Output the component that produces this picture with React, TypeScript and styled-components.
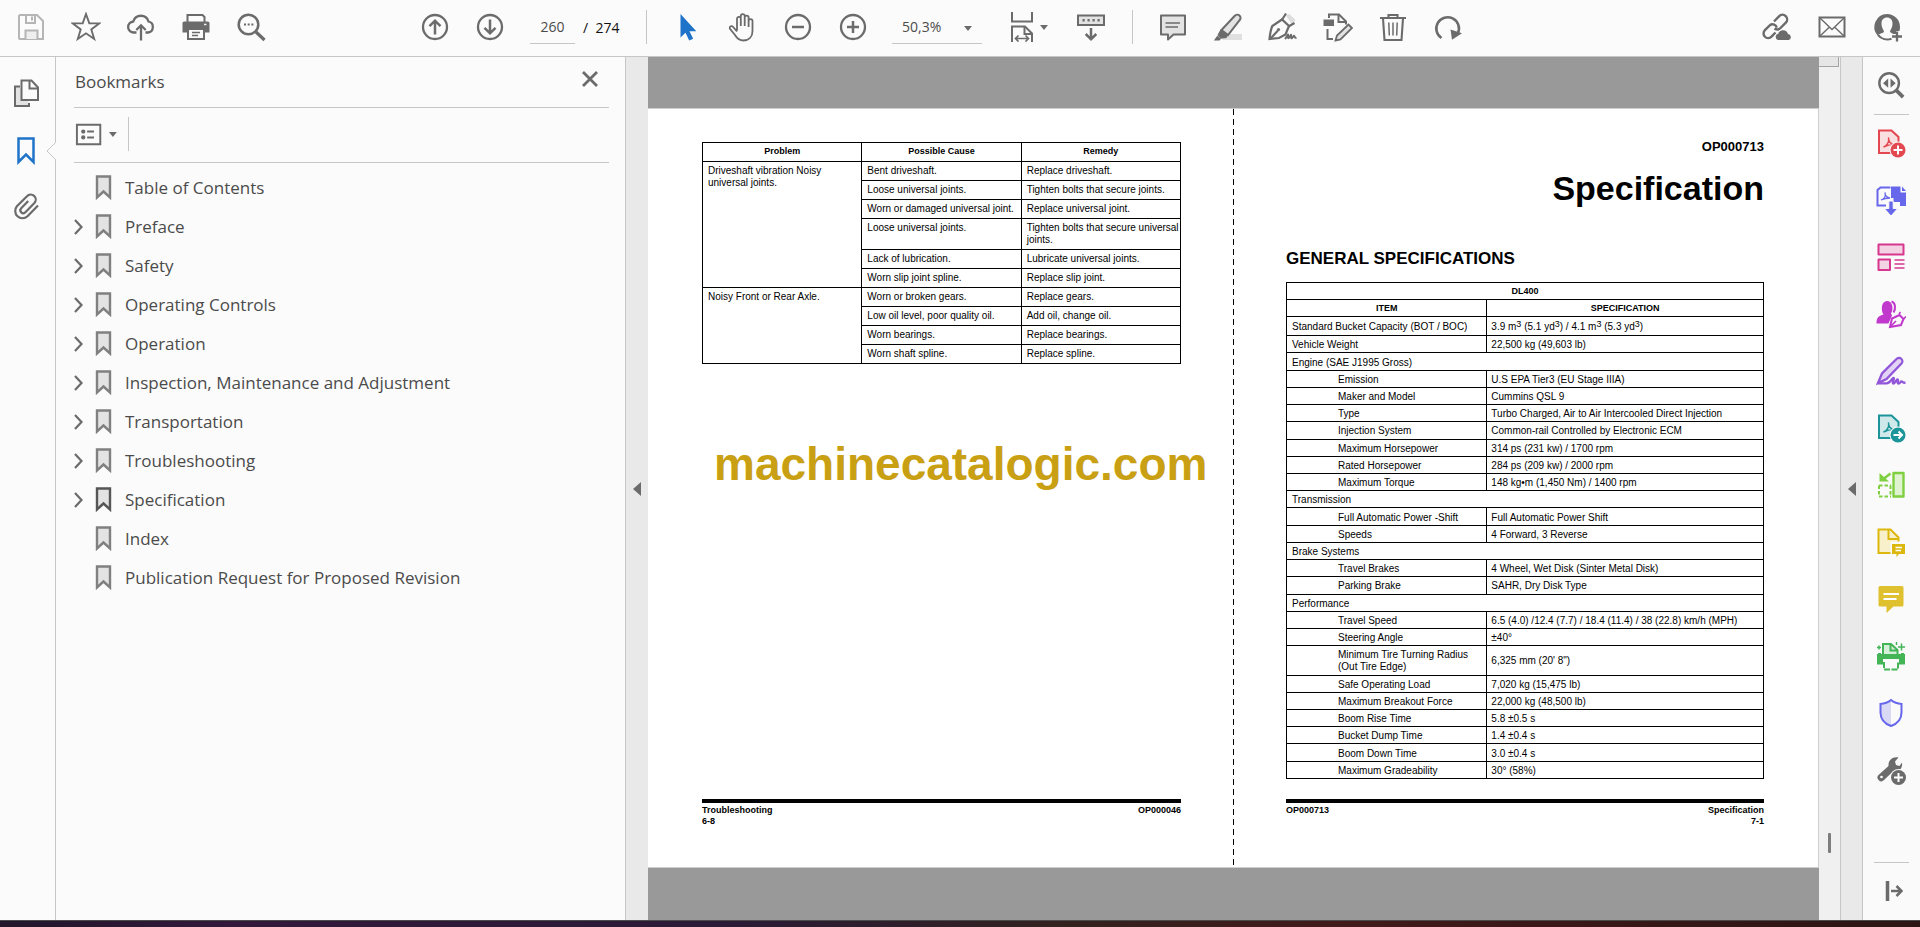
import React from "react";
import styled, { createGlobalStyle } from "styled-components";

const ink = "#6b6b6b";
const line = "#c6c6c6";
const uiFont = `"Open Sans", "Noto Sans", sans-serif`;
const pageFont = `"Liberation Sans", Arial, sans-serif`;

const GlobalStyle = createGlobalStyle`
  *, *::before, *::after { box-sizing: border-box; }
  body { margin: 0; font-family: ${uiFont}; color: #4b4b4b; }
  button, input, select { font: inherit; color: inherit; background: none; border: 0; padding: 0; margin: 0; }
  button { cursor: pointer; }
`;

const Shell = styled.div`
  display: flex;
  flex-direction: column;
  height: 100vh;
  overflow: hidden;
`;

const Toolbar = styled.header`
  display: flex;
  flex: none;
  height: 57px;
  padding: 0 6px 2px 3px;
  align-items: center;
  background: #fbfbfb;
  border-bottom: 1px solid ${line};
`;

const FileTools = styled.div`
  display: flex;
  width: 404px;
`;

const ToolGroup = styled.div<{ $end?: boolean }>`
  display: flex;
  align-items: center;
  margin-left: ${(p) => (p.$end ? "auto" : "0")};
`;

const IconButton = styled.button<{ $width?: number }>`
  display: flex;
  flex: none;
  align-items: center;
  justify-content: center;
  gap: 6px;
  width: ${(p) => p.$width ?? 55}px;
  height: 54px;
`;

const Divider = styled.div<{ $before: number; $after: number }>`
  width: 1px;
  height: 34px;
  margin: 0 ${(p) => p.$after}px 0 ${(p) => p.$before}px;
  background: ${line};
`;

const PageInput = styled.input`
  width: 45px;
  height: 34px;
  margin: 0 8px 0 13px;
  border-bottom: 1px solid ${line};
  text-align: center;
  font-size: 14px;
  outline: none;
`;

const PageCount = styled.span`
  width: 38px;
  font-size: 14px;
  color: #111;
  white-space: pre;
`;

const ZoomField = styled.div`
  position: relative;
  width: 90px;
  margin: 0 19px 0 12px;
  svg {
    position: absolute;
    right: 10px;
    top: 16px;
    pointer-events: none;
  }
`;

const ZoomSelect = styled.select`
  appearance: none;
  width: 100%;
  height: 34px;
  padding: 0 20px 0 10px;
  border-bottom: 1px solid ${line};
  border-radius: 0;
  font-size: 14px;
  outline: none;
`;

const Workspace = styled.div`
  display: flex;
  flex: 1;
  min-height: 0;
`;

const Rail = styled.nav`
  display: flex;
  flex-direction: column;
  flex: none;
  align-items: center;
  width: 56px;
  padding-top: 8px;
  background: #fbfbfb;
  border-right: 1px solid ${line};
`;

const RailButton = styled.button`
  position: relative;
  display: flex;
  align-items: center;
  justify-content: center;
  width: 55px;
  height: 57px;
  padding: 0 2px 2px 0;
`;

const Notch = styled.svg`
  position: absolute;
  right: -1px;
  top: 20px;
`;

const Panel = styled.aside`
  flex: none;
  width: 570px;
  padding: 0 16px 0 18px;
  background: #fbfbfb;
  border-right: 1px solid ${line};
`;

const PanelHead = styled.div`
  display: flex;
  justify-content: space-between;
  height: 51px;
  padding: 0 11px 2px 1px;
  align-items: center;
  border-bottom: 1px solid ${line};
`;

const PanelTitle = styled.h2`
  margin: 0;
  font-size: 17px;
  font-weight: 400;
`;

const PanelTools = styled.div`
  display: flex;
  align-items: center;
  height: 55px;
  padding-bottom: 2px;
  border-bottom: 1px solid ${line};
`;

const Tree = styled.ul`
  margin: 5px 0 0;
  padding: 0;
  list-style: none;
`;

const TreeRow = styled.li`
  display: flex;
  align-items: center;
  height: 39px;
`;

const Toggle = styled.span`
  display: flex;
  width: 21px;
`;

const Expander = styled.button`
  display: flex;
`;

const TreeLink = styled.a`
  display: flex;
  align-items: center;
  gap: 13px;
  color: inherit;
  text-decoration: none;
  font-size: 17px;
  line-height: 24px;
`;

const Splitter = styled.button<{ $slim?: boolean }>`
  display: flex;
  flex: none;
  align-items: center;
  justify-content: center;
  width: ${(p) => (p.$slim ? 21 : 22)}px;
  background: #e9e9e9;
`;

const Doc = styled.main`
  display: flex;
  flex: 1;
  min-width: 0;
  padding: 51px 0 52px;
  background: #999;
`;

const Spread = styled.div`
  display: grid;
  flex: 1;
  grid-template-columns: minmax(0, 1fr) minmax(0, 1fr);
  background: #fff;
  border: solid #cfcfcf;
  border-width: 1px 1px 1px 0;
  color: #000;
  font-family: ${pageFont};
`;

const Sheet = styled.section<{ $fold?: boolean }>`
  display: flex;
  flex-direction: column;
  min-width: 0;
  padding: ${(p) => (p.$fold ? "30px 54px 29px 53px" : "33px 52px 29px 54px")};
  background: ${(p) => (p.$fold ? "linear-gradient(#000 60%, #fff 60%) left top / 1px 10px repeat-y" : "none")};
`;

const Grid = styled.table`
  width: 100%;
  border-collapse: collapse;
  table-layout: fixed;
  font-size: 10px;
  line-height: 12px;
  th, td {
    padding: 3px 0 3px 5px;
    border: 1px solid #000;
    text-align: left;
    vertical-align: top;
    font-weight: 400;
  }
  thead th {
    padding: 2px 4px 4px;
    text-align: center;
    font-size: 9px;
    font-weight: 700;
  }
`;

const SpecGrid = styled(Grid)`
  height: 497px;
  th, td {
    padding: 3px 4px 1px;
    vertical-align: middle;
  }
  thead th {
    padding: 2px 4px;
  }
  tbody tr:first-child td {
    padding: 4px 4px 2px;
  }
  sup {
    font-size: 9px;
    line-height: 0;
    vertical-align: 3px;
  }
`;

const ItemCol = styled.col`
  width: 42%;
`;

const ItemCell = styled.th<{ $inset?: boolean }>`
  && {
    padding-left: ${(p) => (p.$inset ? 51 : 5)}px;
  }
`;

const Watermark = styled.p`
  margin: 74px 0 0 12px;
  color: #c9a013;
  font-size: 46px;
  font-weight: 700;
  line-height: 52px;
  white-space: nowrap;
`;

const PageCode = styled.div`
  text-align: right;
  font-size: 13px;
  font-weight: 700;
  line-height: 16px;
`;

const Title = styled.h1`
  margin: 12px 0 0;
  text-align: right;
  font-size: 34px;
  font-weight: 700;
  line-height: 42px;
`;

const SectionTitle = styled.h2`
  margin: 39px 0 12px;
  font-size: 17px;
  font-weight: 700;
  line-height: 22px;
`;

const PageFooter = styled.footer`
  display: flex;
  justify-content: space-between;
  height: 39px;
  margin-top: auto;
  padding-top: 2px;
  border-top: 4px solid #000;
  font-size: 9px;
  font-weight: 700;
  line-height: 11px;
`;

const FootSide = styled.div<{ $right?: boolean }>`
  text-align: ${(p) => (p.$right ? "right" : "left")};
`;

const ScrollTrack = styled.div`
  display: flex;
  flex-direction: column;
  flex: none;
  justify-content: space-between;
  align-items: center;
  width: 22px;
  padding-bottom: 67px;
  background: #f0f0f0;
  border-right: 1px solid ${line};
`;

const ScrollCap = styled.div`
  align-self: flex-start;
  width: 20px;
  height: 10px;
  background: #e6e6e6;
  border: solid #a5a5a5;
  border-width: 0 1px 1px 0;
`;

const ScrollMark = styled.div`
  width: 3px;
  height: 20px;
  background: #7d7d7d;
  border-radius: 1px;
`;

const ToolRail = styled.nav`
  display: flex;
  flex: none;
  flex-direction: column;
  align-items: center;
  width: 58px;
  background: #fafafa;
  border-left: 1px solid ${line};
`;

const ToolButton = styled.button`
  display: flex;
  flex: none;
  align-items: center;
  justify-content: center;
  width: 57px;
  height: 57px;
  padding: 0 1px 2px 0;
`;

const Rule = styled.div<{ $low?: boolean }>`
  flex: none;
  width: 35px;
  height: 1px;
  margin-top: ${(p) => (p.$low ? "auto" : "0")};
  background: ${line};
`;

const Desktop = styled.div`
  flex: none;
  height: 7px;
  background: linear-gradient(90deg, #21162b 0, #33183b 12%, #2a1a36 38%, #33221f 55%, #421a1a 70%, #2c1514 100%);
  border-top: 1px solid #4b4b4b;
`;

const Glyph = ({ children, size = 30, color = ink }: { children: React.ReactNode; size?: number; color?: string }) => (
  <svg width={size} height={size} viewBox="0 0 30 30" fill="none" stroke={color} strokeWidth="2" aria-hidden="true">
    {children}
  </svg>
);

const Caret = () => (
  <svg width="8" height="5" viewBox="0 0 8 5" aria-hidden="true">
    <path d="M0 0h8L4 5z" fill={ink} />
  </svg>
);

const SplitArrow = () => (
  <svg width="8" height="14" viewBox="0 0 8 14" aria-hidden="true">
    <path d="M8 0v14L0 7z" fill={ink} />
  </svg>
);

const Ribbon = ({ strong }: { strong?: boolean }) => (
  <svg width="17" height="25" viewBox="0 0 17 25" aria-hidden="true">
    <path
      d="M2 1.500h13v21l-6.500-6-6.500 6z"
      fill="#e3e3e3"
      stroke={strong ? "#565656" : "#808080"}
      strokeWidth="2.400"
    />
  </svg>
);

const icons = {
  save: (
    <Glyph color="#b5b5b5">
      <path d="M4 3h17l6 6v18H4a1 1 0 0 1-1-1V4z" fill="#fbfbfb" />
      <path d="M10 3v8h9V3M16 4.500v4" />
      <path d="M9.500 27V18.500h12V27" fill="#eee" />
    </Glyph>
  ),
  star: (
    <Glyph>
      <path d="M15 2l3.300 9.200 9.900.2-7.900 6 2.900 9.600-8.200-5.700L6.800 27l2.900-9.600-7.900-6 9.900-.2z" strokeWidth="1.900" />
    </Glyph>
  ),
  cloud: (
    <Glyph>
      <path d="M10.500 20.500H8a5.500 5.500 0 0 1-.7-11A7.900 7.900 0 0 1 22.500 9.500a5.600 5.600 0 0 1-.5 11h-2.500" strokeWidth="2.300" />
      <path d="M15 28.500V14.500M10.300 18l4.700-4.700 4.700 4.700" strokeWidth="2.300" />
    </Glyph>
  ),
  print: (
    <Glyph>
      <path d="M6.500 10V3h15l2 2v5" />
      <path d="M3 9.500h24a1.500 1.500 0 0 1 1.500 1.500v9.500h-5V17h-17v3.500h-5V11A1.500 1.500 0 0 1 3 9.500z" fill={ink} stroke="none" />
      <path d="M7 17h16v10H7z" fill="#fbfbfb" />
      <path d="M11 20.500h8M11 23.500h6" strokeWidth="1.600" />
      <path d="M23 12.500h2.500" stroke="#eee" strokeWidth="1.500" />
    </Glyph>
  ),
  find: (
    <Glyph>
      <circle cx="12.500" cy="12.500" r="9.800" strokeWidth="2.500" />
      <path d="M20 20l8.500 8" strokeWidth="3.200" />
      <path d="M8 12.500h2M11.700 12.500h2M15.400 12.500h2" />
    </Glyph>
  ),
  up: (
    <Glyph>
      <circle cx="15" cy="15" r="12" strokeWidth="2.300" />
      <path d="M15 22.500V9M9.500 14.200L15 8.700l5.500 5.500" strokeWidth="2.500" />
    </Glyph>
  ),
  down: (
    <Glyph>
      <circle cx="15" cy="15" r="12" strokeWidth="2.300" />
      <path d="M15 7.500V21M9.500 15.800l5.500 5.500 5.500-5.500" strokeWidth="2.500" />
    </Glyph>
  ),
  cursor: (
    <Glyph color="none">
      <path d="M7.500 2v23.500l5-4.700 3.700 7.700 4-1.800-3.700-7.500h6.800z" fill="#1f74c9" />
    </Glyph>
  ),
  hand: (
    <Glyph>
      <path
        d="M9 18.500V6.800a1.900 1.900 0 0 1 3.800 0V14V4a1.900 1.900 0 0 1 3.900 0v10V5.500a1.900 1.900 0 0 1 3.900 0V15V9a1.900 1.900 0 0 1 3.900 0v10c0 6-3.500 9.500-9 9.500-4.500 0-6.500-2-8.500-5.500L1.800 16.500c-.7-2.200 2-3.200 3.400-1.500L9 19.500"
        strokeWidth="1.800"
      />
    </Glyph>
  ),
  minus: (
    <Glyph>
      <circle cx="15" cy="15" r="12" strokeWidth="2.300" />
      <path d="M9 15h12" strokeWidth="2.500" />
    </Glyph>
  ),
  plus: (
    <Glyph>
      <circle cx="15" cy="15" r="12" strokeWidth="2.300" />
      <path d="M9 15h12M15 9v12" strokeWidth="2.500" />
    </Glyph>
  ),
  fit: (
    <svg width="24" height="30" viewBox="0 0 24 30" fill="none" stroke={ink} strokeWidth="2" aria-hidden="true">
      <path d="M2 0v9.500h20V0M2 30V14.500h13l7 7V30" />
      <path d="M14.500 15v7H22" />
      <path d="M6 26.500h12M8.500 23.500l-3 3 3 3M15.500 23.500l3 3-3 3" strokeWidth="1.700" />
    </svg>
  ),
  keys: (
    <Glyph>
      <path d="M2 3.500h26v9.500H2z" fill="#e3e3e3" />
      <path d="M6.500 8.300h2.200M11.500 8.300h2.200M16.500 8.300h2.200M21.500 8.300h2.200" strokeWidth="2.600" />
      <path d="M15 16v11M9.700 22l5.300 5.300 5.300-5.300" strokeWidth="2.500" />
    </Glyph>
  ),
  comment: (
    <Glyph>
      <path d="M3 3.500h24v19H15.500L10 27.500v-5H3z" fill="#e3e3e3" strokeLinejoin="round" />
      <path d="M7.500 11H22M7.500 15H20" strokeWidth="1.500" />
    </Glyph>
  ),
  marker: (
    <Glyph>
      <path d="M15 22h14v6H9z" fill="#e0e0e0" stroke="none" />
      <path d="M8.500 18L21.800 3.800a3.200 3.200 0 0 1 5 4.200L15 23z" fill="#e3e3e3" />
      <path d="M7.500 17.500l7.300 6-1.300 2.500-5.500.8L4.500 23z" fill={ink} stroke="none" />
      <path d="M4.500 23.500l3.500 3.300L6.500 28.500H.8z" fill={ink} stroke="none" />
    </Glyph>
  ),
  sign: (
    <Glyph>
      <path d="M17.500 3l4-1 6 6-3.500 4.500z" fill="#dedede" stroke="none" />
      <path d="M1.500 27c.5-5 1.300-9.500 2.800-13L14 7.500l7 6.500-3.500 8.500L11 26z" strokeWidth="2.200" />
      <path d="M2 27l8-8.500M13.500 8.500L18 1.500M20.500 14.500l6-3.500" strokeWidth="2.200" />
      <circle cx="10.500" cy="17.500" r="1.600" fill={ink} stroke="none" />
      <path d="M17 27c1.500-1.500 2.500-4.500 3-4.500s-.5 3.800.3 3.800 2.200-3.500 2.700-3.500-.3 3.500.5 3.500 2-2.500 2.500-2.500.3 2.200 2.500 2.200" strokeWidth="1.900" />
    </Glyph>
  ),
  edit: (
    <Glyph>
      <path d="M6 6V2.500h10l7 7v3" />
      <path d="M15.500 3v7H23M4.500 17v10H10" />
      <path d="M.5 7.500h10.500v6.500H.5z" fill={ink} strokeLinejoin="round" stroke="none" />
      <path d="M12.500 28.500l1.500-5L25.500 12.500l3.500 3.500L17.500 27.500z" fill="#e3e3e3" strokeWidth="1.800" />
    </Glyph>
  ),
  trash: (
    <Glyph>
      <path d="M2 6h26M10.500 5.500V3h9v2.500M5 6.500l1.500 21.500h17L25 6.500" strokeWidth="2.100" />
      <path d="M10.800 10.500l.5 13M15 10.500v13M19.200 10.500l-.5 13" strokeWidth="1.500" />
    </Glyph>
  ),
  rotate: (
    <Glyph>
      <path d="M8.500 26A11.300 11.300 0 1 1 25 21" strokeWidth="2.600" />
      <path d="M17.500 17.500l11.500 3.700-10 6.500z" fill={ink} stroke="none" />
    </Glyph>
  ),
  link: (
    <Glyph>
      <path d="M12 9.500l5.200-5.300a4.600 4.600 0 0 1 6.600 6.500L18.500 16a4.600 4.600 0 0 1-6 .5" strokeWidth="2.400" />
      <path d="M13.500 20.500l-4 4.200a4.600 4.600 0 0 1-6.600-6.500l5.300-5.300a4.600 4.600 0 0 1 6.600 2.800" strokeWidth="2.400" />
      <path d="M16 28a3.200 3.200 0 0 1 .2-6.200A5.100 5.100 0 0 1 26 22a3.100 3.100 0 0 1 .8 6z" fill={ink} stroke="none" />
    </Glyph>
  ),
  mail: (
    <Glyph>
      <path d="M2.500 5.500h25v19h-25z" />
      <path d="M3 6l12 11.500L27 6M3 24l9.500-9M27 24l-9.500-9" strokeWidth="1.400" />
    </Glyph>
  ),
  user: (
    <Glyph>
      <path d="M15 2a13 13 0 0 1 13 13c0 1.500-.2 2.800-.5 4h-3.500v3h-3c-.8-1-3-1.500-3-2.500 0-1.200 2.500-3.300 2.500-8 0-3.700-2.200-6-5.500-6s-5.500 2.300-5.500 6c0 4.700 2.500 6.800 2.500 8 0 1.500-4.500 2-6.500 4A13 13 0 0 1 15 2z" fill={ink} stroke="none" />
      <path d="M6 23a12 12 0 0 0 13.500 3.700" />
      <path d="M25 19.500v10M20 24.500h10" strokeWidth="2.300" />
    </Glyph>
  ),
  pages: (
    <Glyph>
      <path d="M8 8.500H3V28h14v-3" fill="#e3e3e3" />
      <path d="M9.500 2.500h10l6.500 7V22H9.500z" fill="#fbfbfb" />
      <path d="M17.500 3v7.500H26" />
    </Glyph>
  ),
  ribbon: (
    <Glyph color="#1f74c9">
      <path d="M6.500 3.500h15v23.500l-7.500-7.500-7.500 7.500z" strokeWidth="2.500" />
    </Glyph>
  ),
  clip: (
    <Glyph>
      <path
        d="M26 13.500L15.500 24.300a7.300 7.300 0 0 1-10.600-10L15 4.200a5 5 0 0 1 7.400 6.800l-9 9.300a2.900 2.900 0 0 1-4.200-4l7-7.300"
        strokeWidth="2.200"
      />
    </Glyph>
  ),
  options: (
    <Glyph>
      <path d="M3 5.500h24v20H3z" />
      <path d="M13.500 12.500h7M13.500 18.500h7" strokeWidth="2" />
      <circle cx="9.500" cy="12.500" r="2.200" fill={ink} stroke="none" />
      <circle cx="9.500" cy="18.500" r="2.200" fill={ink} stroke="none" />
    </Glyph>
  ),
  close: (
    <svg width="16" height="16" viewBox="0 0 16 16" fill="none" stroke={ink} strokeWidth="2.800" aria-hidden="true">
      <path d="M1 1l14 14M15 1L1 15" />
    </svg>
  ),
};

const tools: { name: string; icon: React.ReactNode }[] = [
  {
    name: "Create PDF",
    icon: (
      <Glyph color="#e34850">
        <path d="M3 2.500h12.500l7 6.500V25H3z" fill="#f9dfe0" />
        <path d="M7.500 19c3-1 6-5 5-9.500 0 4 2 6.500 6 7-4-.5-7 .5-11 2.500z" strokeWidth="1.400" />
        <circle cx="22" cy="22" r="8.500" fill="#fafafa" stroke="none" />
        <circle cx="22" cy="22" r="7.500" fill="#e34850" stroke="none" />
        <path d="M22 17.500v9M17.500 22h9" stroke="#fff" />
      </Glyph>
    ),
  },
  {
    name: "Export PDF",
    icon: (
      <Glyph color="#6767ec">
        <path d="M14.500 2.500H4.500L1.500 5v15.500H10" />
        <path d="M5 15c3-1 5-4 4-7.500 0 3 1.500 5 5 5.500-3 0-6 .5-9 2z" strokeWidth="1.300" />
        <path d="M15 1.500h9.500v6H30V21h-6v-4h-6.500v-4H15z" fill="#6767ec" stroke="none" />
        <path d="M26 1.500l4 4.500h-4z" fill="#6767ec" stroke="none" />
        <path d="M12.800 16h4.400v7.500h4.500L15 31l-6.700-7.500h4.500z" fill="#6767ec" stroke="#fafafa" strokeWidth="1" />
      </Glyph>
    ),
  },
  {
    name: "Organize Pages",
    icon: (
      <Glyph color="#d83790">
        <path d="M2.500 2.500h25v10h-25zM2.500 17.500H14V28H2.500z" fill="#f3d2e3" strokeLinejoin="round" />
        <path d="M18.500 18h10M18.500 22h10M18.500 26h10" strokeWidth="1.300" />
      </Glyph>
    ),
  },
  {
    name: "Request Signatures",
    icon: (
      <Glyph color="#c038cc">
        <path d="M.5 24.500c0-6 2-7.500 7-9C4.500 11 5.500 2 11 2s7 8 4 12.500l1 2-3.500 8z" fill="#c038cc" stroke="none" />
        <path d="M15.500 2.500c4 1 4.500 7 2 11" />
        <path d="M14 28l2-8.500 7.500-3.500 4 4-2.500 6z" fill="#fafafa" />
        <path d="M14 28l6-6M23 15l1.500-2M27.500 20l2.500-2.500" strokeWidth="1.600" />
      </Glyph>
    ),
  },
  {
    name: "Fill & Sign",
    icon: (
      <Glyph color="#9256d9">
        <path d="M2 27l4-9.500L20.500 3a3 3 0 0 1 5 4.500L10.500 23z" fill="#e3d3f4" strokeWidth="2.300" />
        <path
          d="M2 27.300h8.500c4 0 5.500-5.300 7-5.300s-2 5.500 0 5.500 2.500-4 4-4-1 4 1 4 1.500-2 3-2 1 1.500 4 1.200"
          strokeWidth="2.300"
        />
      </Glyph>
    ),
  },
  {
    name: "Share for Review",
    icon: (
      <Glyph color="#1b959a">
        <path d="M3 2.500h12.500l7 6.500V25H3z" fill="#cfe9ea" />
        <path d="M7.500 19c3-1 6-5 5-9.500 0 4 2 6.500 6 7-4-.5-7 .5-11 2.500z" strokeWidth="1.400" />
        <circle cx="22" cy="22" r="8.500" fill="#fafafa" stroke="none" />
        <circle cx="22" cy="22" r="7.500" fill="#1b959a" stroke="none" />
        <path d="M17.500 22h7M22.500 18.500L26 22l-3.500 3.500" stroke="#fff" />
      </Glyph>
    ),
  },
  {
    name: "Compare Files",
    icon: (
      <Glyph color="#7fd040">
        <path d="M17.500 3h10v23.500h-10z" fill="#e0f3d0" strokeWidth="2.400" strokeLinejoin="round" />
        <path d="M3 15.500h12M3 26.500h12M3 15.500v11M14.500 15.500v11" strokeDasharray="3.500 2" />
        <path d="M14.500 3.500L8 8.500" strokeWidth="2.500" />
        <path d="M3.500 3v8.500h9.500z" fill="#7fd040" stroke="none" />
      </Glyph>
    ),
  },
  {
    name: "Send for Comments",
    icon: (
      <Glyph color="#dcb70c">
        <path d="M2.500 2.500h12l8 8V26h-20z" fill="#f8f0cb" />
        <path d="M12.500 3v9h10" />
        <path d="M14.500 14.500H30V30H14.500z" fill="#fafafa" stroke="none" />
        <path d="M16 17h13v10h-6l-2.500 3V27H16z" fill="#dcb70c" stroke="none" />
        <path d="M19.500 20.500h6.500M19.500 23.500H25" stroke="#fff" strokeWidth="1.400" />
      </Glyph>
    ),
  },
  {
    name: "Comment",
    icon: (
      <Glyph color="#dfc02e">
        <path d="M4 2h22a1.500 1.500 0 0 1 1.500 1.500V21a1.500 1.500 0 0 1-1.500 1.500H17.500L10.500 29v-6.500H4A1.500 1.500 0 0 1 2.500 21V3.500A1.500 1.500 0 0 1 4 2z" fill="#dfc02e" stroke="none" />
        <path d="M7.500 10H23M7.500 15h13" stroke="#fff" />
      </Glyph>
    ),
  },
  {
    name: "Scan & Print",
    icon: (
      <Glyph color="#44b556">
        <path d="M7 14V3h8l6.500 6v5" fill="#d5efd9" />
        <path d="M14.500 3v6.500H21" />
        <path d="M3.500 12v2.500h23V12M2.500 13v9h3v-4M27.500 13v9h-3v-4M3 16.500h24" strokeWidth="3" />
        <path d="M8 21v7.500h14V21" strokeDasharray="6 1.500" />
        <path d="M25.500 2.500v7M22 6h7M3 4.500v4M1 6.500h4M20.500 1v3" strokeWidth="1.500" />
      </Glyph>
    ),
  },
  {
    name: "Protect",
    icon: (
      <Glyph color="#6767ec">
        <path d="M15 3v25C8 25 5 21 5 14V6.500C9 6.500 12 5.500 15 3z" fill="#d9d9f5" stroke="none" />
        <path d="M15 2c3 2.500 6.500 3.700 10.500 4v8.500C25.500 21 22 25.500 15 28 8 25.500 4.500 21 4.500 14.500V6C8.500 5.700 12 4.500 15 2z" />
      </Glyph>
    ),
  },
  {
    name: "More Tools",
    icon: (
      <Glyph>
        <path d="M22.500 2.500L19 6.500l1 3.500 3.500 1 2.500-3.500c1 6-3.500 9.500-8.500 8.500L8 25a3.700 3.700 0 0 1-5.500-5L12.500 11C12 5 17 1 22.500 2.500z" fill={ink} stroke="none" />
        <circle cx="5.500" cy="22" r="1.300" fill="#fff" stroke="none" />
        <circle cx="22.500" cy="22.500" r="8.500" fill="#fafafa" stroke="none" />
        <circle cx="22.500" cy="22.500" r="7.500" fill={ink} stroke="none" />
        <path d="M22.500 18v9M18 22.500h9" stroke="#fff" />
      </Glyph>
    ),
  },
];

const bookmarks = [
  { label: "Table of Contents", leaf: true },
  { label: "Preface" },
  { label: "Safety" },
  { label: "Operating Controls" },
  { label: "Operation" },
  { label: "Inspection, Maintenance and Adjustment" },
  { label: "Transportation" },
  { label: "Troubleshooting" },
  { label: "Specification", current: true },
  { label: "Index", leaf: true },
  { label: "Publication Request for Proposed Revision", leaf: true },
];

const faults = [
  {
    problem: "Driveshaft vibration Noisy universal joints.",
    rows: [
      ["Bent driveshaft.", "Replace driveshaft."],
      ["Loose universal joints.", "Tighten bolts that secure joints."],
      ["Worn or damaged universal joint.", "Replace universal joint."],
      ["Loose universal joints.", "Tighten bolts that secure universal joints."],
      ["Lack of lubrication.", "Lubricate universal joints."],
      ["Worn slip joint spline.", "Replace slip joint."],
    ],
  },
  {
    problem: "Noisy Front or Rear Axle.",
    rows: [
      ["Worn or broken gears.", "Replace gears."],
      ["Low oil level, poor quality oil.", "Add oil, change oil."],
      ["Worn bearings.", "Replace bearings."],
      ["Worn shaft spline.", "Replace spline."],
    ],
  },
];

type Spec = { item: React.ReactNode; value?: React.ReactNode; top?: boolean };

const specs: Spec[] = [
  {
    item: "Standard Bucket Capacity (BOT / BOC)",
    value: (
      <>
        3.9 m<sup>3</sup> (5.1 yd<sup>3</sup>) / 4.1 m<sup>3</sup> (5.3 yd<sup>3</sup>)
      </>
    ),
    top: true,
  },
  { item: "Vehicle Weight", value: "22,500 kg (49,603 lb)", top: true },
  { item: "Engine (SAE J1995 Gross)" },
  { item: "Emission", value: "U.S EPA Tier3 (EU Stage IIIA)" },
  { item: "Maker and Model", value: "Cummins QSL 9" },
  { item: "Type", value: "Turbo Charged, Air to Air Intercooled Direct Injection" },
  { item: "Injection System", value: "Common-rail Controlled by Electronic ECM" },
  { item: "Maximum Horsepower", value: "314 ps (231 kw) / 1700 rpm" },
  { item: "Rated Horsepower", value: "284 ps (209 kw) / 2000 rpm" },
  { item: "Maximum Torque", value: "148 kg•m (1,450 Nm) / 1400 rpm" },
  { item: "Transmission" },
  { item: "Full Automatic Power -Shift", value: "Full Automatic Power Shift" },
  { item: "Speeds", value: "4 Forward, 3 Reverse" },
  { item: "Brake Systems" },
  { item: "Travel Brakes", value: "4 Wheel, Wet Disk (Sinter Metal Disk)" },
  { item: "Parking Brake", value: "SAHR, Dry Disk Type" },
  { item: "Performance" },
  { item: "Travel Speed", value: "6.5 (4.0) /12.4 (7.7) / 18.4 (11.4) / 38 (22.8) km/h (MPH)" },
  { item: "Steering Angle", value: "±40°" },
  {
    item: (
      <>
        Minimum Tire Turning Radius
        <br />
        (Out Tire Edge)
      </>
    ),
    value: "6,325 mm (20' 8\")",
  },
  { item: "Safe Operating Load", value: "7,020 kg (15,475 lb)" },
  { item: "Maximum Breakout Force", value: "22,000 kg (48,500 lb)" },
  { item: "Boom Rise Time", value: "5.8 ±0.5 s" },
  { item: "Bucket Dump Time", value: "1.4 ±0.4 s" },
  { item: "Boom Down Time", value: "3.0 ±0.4 s" },
  { item: "Maximum Gradeability", value: "30° (58%)" },
];

export default function App() {
  return (
    <Shell>
      <GlobalStyle />
      <Toolbar>
        <FileTools>
          <IconButton aria-label="Save">{icons.save}</IconButton>
          <IconButton aria-label="Star">{icons.star}</IconButton>
          <IconButton aria-label="Upload">{icons.cloud}</IconButton>
          <IconButton aria-label="Print">{icons.print}</IconButton>
          <IconButton aria-label="Find">{icons.find}</IconButton>
        </FileTools>
        <ToolGroup>
          <IconButton aria-label="Previous page">{icons.up}</IconButton>
          <IconButton aria-label="Next page">{icons.down}</IconButton>
          <PageInput aria-label="Page number" defaultValue="260" />
          <PageCount>{"/  274"}</PageCount>
          <Divider $before={25} $after={13} />
          <IconButton aria-label="Select">{icons.cursor}</IconButton>
          <IconButton aria-label="Pan">{icons.hand}</IconButton>
          <IconButton aria-label="Zoom out">{icons.minus}</IconButton>
          <IconButton aria-label="Zoom in">{icons.plus}</IconButton>
          <ZoomField>
            <ZoomSelect aria-label="Zoom level" defaultValue="50,3%">
              <option>50,3%</option>
              <option>100%</option>
            </ZoomSelect>
            <Caret />
          </ZoomField>
          <IconButton $width={56} aria-label="Page fit">
            {icons.fit}
            <Caret />
          </IconButton>
          <IconButton $width={67} aria-label="Show toolbar">
            {icons.keys}
          </IconButton>
          <Divider $before={8} $after={12} />
          <IconButton aria-label="Add comment">{icons.comment}</IconButton>
          <IconButton aria-label="Highlight">{icons.marker}</IconButton>
          <IconButton aria-label="Sign">{icons.sign}</IconButton>
          <IconButton aria-label="Edit page">{icons.edit}</IconButton>
          <IconButton aria-label="Delete">{icons.trash}</IconButton>
          <IconButton aria-label="Rotate">{icons.rotate}</IconButton>
        </ToolGroup>
        <ToolGroup $end>
          <IconButton aria-label="Share link">{icons.link}</IconButton>
          <IconButton aria-label="Send by email">{icons.mail}</IconButton>
          <IconButton aria-label="Invite people">{icons.user}</IconButton>
        </ToolGroup>
      </Toolbar>
      <Workspace>
        <Rail>
          <RailButton aria-label="Page thumbnails">{icons.pages}</RailButton>
          <RailButton aria-label="Bookmarks">
            {icons.ribbon}
            <Notch width="10" height="18" viewBox="0 0 10 18">
              <path d="M10 0v18L1 9z" fill="#fbfbfb" />
              <path d="M9.500 0v.5L1 9l8.500 8.500v.5" fill="none" stroke={line} />
            </Notch>
          </RailButton>
          <RailButton aria-label="Attachments">{icons.clip}</RailButton>
        </Rail>
        <Panel>
          <PanelHead>
            <PanelTitle>Bookmarks</PanelTitle>
            <button aria-label="Close panel">{icons.close}</button>
          </PanelHead>
          <PanelTools>
            <IconButton $width={43} aria-label="Bookmark options">
              {icons.options}
              <Caret />
            </IconButton>
            <Divider $before={11} $after={0} />
          </PanelTools>
          <Tree>
            {bookmarks.map((b) => (
              <TreeRow key={b.label}>
                <Toggle>
                  {!b.leaf && (
                    <Expander aria-label={`Expand ${b.label}`}>
                      <svg width="9" height="16" viewBox="0 0 9 16" fill="none" stroke={ink} strokeWidth="2.200">
                        <path d="M1 1l6.500 7L1 15" />
                      </svg>
                    </Expander>
                  )}
                </Toggle>
                <TreeLink href="#">
                  <Ribbon strong={b.current} />
                  {b.label}
                </TreeLink>
              </TreeRow>
            ))}
          </Tree>
        </Panel>
        <Splitter aria-label="Collapse navigation pane">
          <SplitArrow />
        </Splitter>
        <Doc>
          <Spread>
            <Sheet>
              <Grid>
                <thead>
                  <tr>
                    <th>Problem</th>
                    <th>Possible Cause</th>
                    <th>Remedy</th>
                  </tr>
                </thead>
                <tbody>
                  {faults.map((f) =>
                    f.rows.map(([cause, remedy], i) => (
                      <tr key={f.problem + i}>
                        {i === 0 && <td rowSpan={f.rows.length}>{f.problem}</td>}
                        <td>{cause}</td>
                        <td>{remedy}</td>
                      </tr>
                    )),
                  )}
                </tbody>
              </Grid>
              <Watermark>machinecatalogic.com</Watermark>
              <PageFooter>
                <FootSide>
                  Troubleshooting
                  <br />
                  6-8
                </FootSide>
                <FootSide $right>OP000046</FootSide>
              </PageFooter>
            </Sheet>
            <Sheet $fold>
              <PageCode>OP000713</PageCode>
              <Title>Specification</Title>
              <SectionTitle>GENERAL SPECIFICATIONS</SectionTitle>
              <SpecGrid>
                <colgroup>
                  <ItemCol />
                  <col />
                </colgroup>
                <thead>
                  <tr>
                    <th colSpan={2}>DL400</th>
                  </tr>
                  <tr>
                    <th>ITEM</th>
                    <th>SPECIFICATION</th>
                  </tr>
                </thead>
                <tbody>
                  {specs.map((s, i) => (
                    <tr key={i}>
                      <ItemCell $inset={!!s.value && !s.top} colSpan={s.value ? 1 : 2} scope="row">
                        {s.item}
                      </ItemCell>
                      {s.value && <td>{s.value}</td>}
                    </tr>
                  ))}
                </tbody>
              </SpecGrid>
              <PageFooter>
                <FootSide>OP000713</FootSide>
                <FootSide $right>
                  Specification
                  <br />
                  7-1
                </FootSide>
              </PageFooter>
            </Sheet>
          </Spread>
        </Doc>
        <ScrollTrack>
          <ScrollCap />
          <ScrollMark />
        </ScrollTrack>
        <Splitter $slim aria-label="Collapse tools pane">
          <SplitArrow />
        </Splitter>
        <ToolRail>
          <ToolButton aria-label="Search tools">
            <Glyph size={28}>
              <circle cx="13" cy="13" r="10.500" strokeWidth="2.600" />
              <path d="M20.500 20.500l7.500 7.500" strokeWidth="4" />
              <path d="M12 8v10l-5.500-5zM14.500 8v10l5.500-5z" fill={ink} stroke="none" />
            </Glyph>
          </ToolButton>
          <Rule />
          {tools.map((t) => (
            <ToolButton key={t.name} aria-label={t.name}>
              {t.icon}
            </ToolButton>
          ))}
          <Rule $low />
          <ToolButton aria-label="Collapse tools">
            <svg width="24" height="20" viewBox="-6 0 24 20" fill="none" stroke={ink} aria-hidden="true">
              <path d="M2.500 0v20" strokeWidth="3.500" />
              <path d="M6 10h10M11.500 5l5 5-5 5" strokeWidth="2.500" />
            </svg>
          </ToolButton>
        </ToolRail>
      </Workspace>
      <Desktop />
    </Shell>
  );
}
